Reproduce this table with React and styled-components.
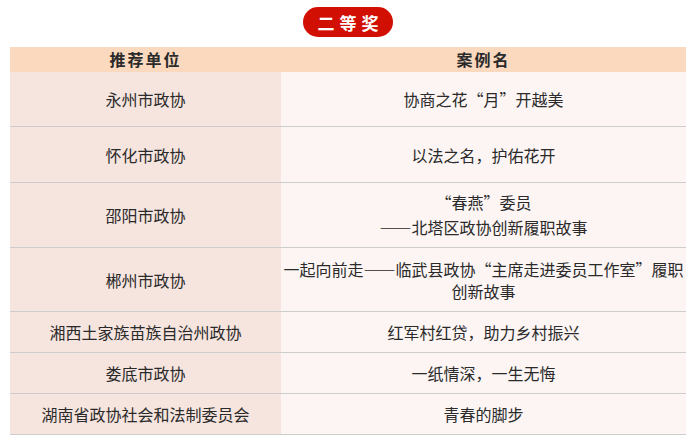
import React from 'react';
import styled, { createGlobalStyle } from 'styled-components';

const GlobalStyle = createGlobalStyle`
  body {
    margin: 0;
    background: #fff;
    font-family: "Noto Sans CJK SC", "Noto Sans", sans-serif;
    color: #2a2a2a;
  }
`;

const Page = styled.div`
  width: 693px;
  padding: 7px 7px 0 10px;
  box-sizing: border-box;
  display: flex;
  flex-direction: column;
  align-items: center;
`;

const Badge = styled.div`
  width: 90px;
  height: 30px;
  border-radius: 15px;
  background: #d20f03;
  color: #fff;
  font-size: 17px;
  font-weight: 700;
  letter-spacing: 5px;
  text-indent: 5px;
  display: flex;
  align-items: center;
  justify-content: center;
  margin-bottom: 10px;
`;

const Table = styled.div`
  width: 100%;
  display: flex;
  flex-direction: column;
`;

const Row = styled.div`
  display: grid;
  grid-template-columns: 271px 1fr;
  height: ${(p) => p.h}px;
  border-bottom: ${(p) => (p.head ? 'none' : '1px solid #cdcdcd')};
  box-sizing: border-box;
`;

const HeadCell = styled.div`
  background: #fbd9bf;
  font-size: 16px;
  font-weight: 700;
  letter-spacing: 2px;
  line-height: 25px;
  text-align: center;
  color: #2a2a2a;
`;

const Cell = styled.div`
  background: ${(p) => (p.left ? '#f6e4de' : '#fcf5f4')};
  font-size: 16px;
  line-height: ${(p) => p.lh || 24}px;
  display: flex;
  flex-direction: column;
  align-items: center;
  justify-content: center;
  text-align: center;
  padding: 0 2px;
  white-space: nowrap;
`;

const rows = [
  { org: '永州市政协', name: ['协商之花“月”开越美'], h: 55 },
  { org: '怀化市政协', name: ['以法之名，护佑花开'], h: 56 },
  { org: '邵阳市政协', name: ['“春燕”委员', '——北塔区政协创新履职故事'], h: 65, lh: 25 },
  { org: '郴州市政协', name: ['一起向前走——临武县政协“主席走进委员工作室”履职', '创新故事'], h: 64, lh: 22 },
  { org: '湘西土家族苗族自治州政协', name: ['红军村红贷，助力乡村振兴'], h: 41 },
  { org: '娄底市政协', name: ['一纸情深，一生无悔'], h: 41 },
  { org: '湖南省政协社会和法制委员会', name: ['青春的脚步'], h: 41 },
];

export default function App() {
  return (
    <>
      <GlobalStyle />
      <Page lang="zh-CN">
        <Badge>二等奖</Badge>
        <Table>
          <Row head h={25}>
            <HeadCell>推荐单位</HeadCell>
            <HeadCell>案例名</HeadCell>
          </Row>
          {rows.map((r) => (
            <Row key={r.org} h={r.h}>
              <Cell left>{r.org}</Cell>
              <Cell lh={r.lh}>
                {r.name.map((line) => (
                  <span key={line}>{line}</span>
                ))}
              </Cell>
            </Row>
          ))}
        </Table>
      </Page>
    </>
  );
}
